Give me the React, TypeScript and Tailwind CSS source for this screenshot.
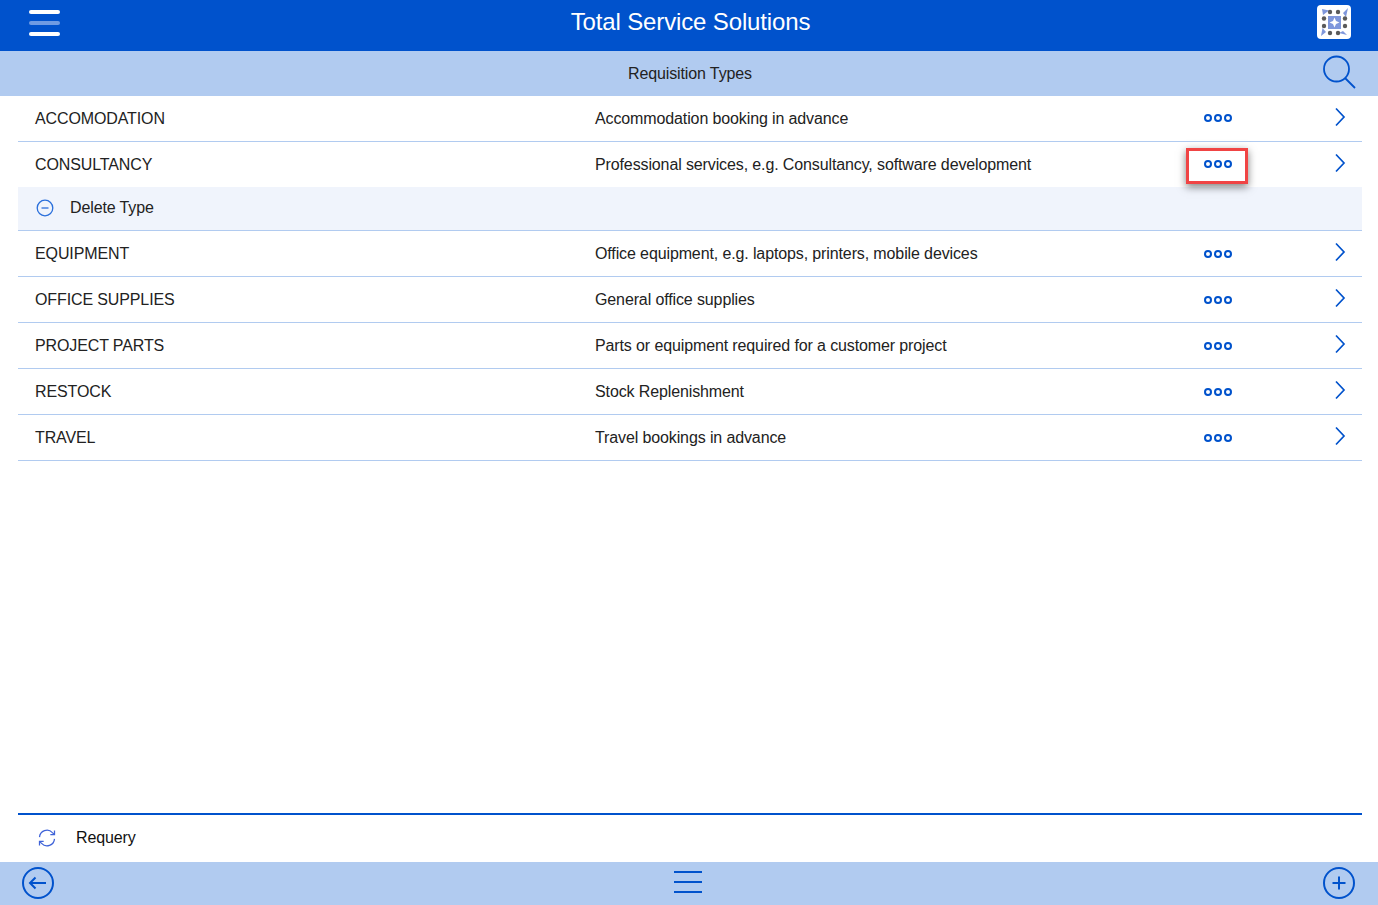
const rows = [
  { name: "ACCOMODATION", desc: "Accommodation booking in advance" },
  { name: "CONSULTANCY", desc: "Professional services, e.g. Consultancy, software development", open: true },
  { name: "EQUIPMENT", desc: "Office equipment, e.g. laptops, printers, mobile devices", low: true },
  { name: "OFFICE SUPPLIES", desc: "General office supplies", low: true },
  { name: "PROJECT PARTS", desc: "Parts or equipment required for a customer project", low: true },
  { name: "RESTOCK", desc: "Stock Replenishment", low: true },
  { name: "TRAVEL", desc: "Travel bookings in advance", low: true },
];

function Dots() {
  return (
    <svg width="30" height="10" viewBox="0 0 30 10" fill="none" stroke="#0052cc" strokeWidth="2">
      <circle cx="5" cy="5" r="3" />
      <circle cx="15" cy="5" r="3" />
      <circle cx="25" cy="5" r="3" />
    </svg>
  );
}

function Chevron() {
  return (
    <svg width="12" height="20" viewBox="0 0 12 20" fill="none" stroke="#0052cc" strokeWidth="1.7">
      <path d="M2 1.5 10 10 2 18.5" />
    </svg>
  );
}

function Logo() {
  return (
    <div className="flex h-[34px] w-[34px] items-center justify-center rounded-[4px] bg-white">
      <svg width="30" height="30" viewBox="0 0 30 30">
        <path d="M3 2 10 3.5 4 8ZM29 1 27 10 24 6ZM2 29 3.5 21 7 25ZM28 28 20 26 24 24Z" fill="#7f97dc" />
        <rect x="9" y="9" width="13" height="13" fill="#7f97dc" />
        <path d="M15.5 10.5 17 14 20.5 15.5 17 17 15.5 20.5 14 17 10.5 15.5 14 14Z" fill="#fff" />
        <g fill="#5a5a5a">
          <circle cx="11" cy="5" r="2.2" />
          <circle cx="19" cy="5" r="2.2" />
          <circle cx="5" cy="11.5" r="2.2" />
          <circle cx="5" cy="19" r="2.2" />
          <circle cx="26" cy="11.5" r="2.2" />
          <circle cx="26" cy="19" r="2.2" />
          <circle cx="11" cy="26" r="2.2" />
          <circle cx="19" cy="26" r="2.2" />
        </g>
      </svg>
    </div>
  );
}

export default function App() {
  return (
    <div className="flex h-[905px] w-full flex-col overflow-hidden bg-white font-['Liberation_Sans',sans-serif] text-[16px] tracking-[-0.12px] text-[#222]">
      <header className="flex h-[51px] items-center justify-between bg-[#0052cc] pl-[29px] pr-[27px]">
        <div className="flex w-[31px] flex-col gap-[7px] pb-[6px]">
          <span className="h-[4px] rounded-full bg-white" />
          <span className="h-[4px] rounded-full bg-[#6f9be3]" />
          <span className="h-[4px] rounded-full bg-white" />
        </div>
        <h1 className="ml-[4px] pb-[7px] text-[24px] tracking-[-0.14px] text-white">
          Total Service Solutions
        </h1>
        <div className="pb-[7px]">
          <Logo />
        </div>
      </header>

      <div className="flex h-[45px] items-center justify-between bg-[#b1cbf0] pl-[628px] pr-[22px]">
        <span>Requisition Types</span>
        <svg className="mb-[3px]" width="34" height="34" viewBox="0 0 34 34" fill="none" stroke="#0052cc" strokeWidth="1.8">
          <circle cx="14.5" cy="14" r="12.5" />
          <path d="M23 23 33 33" />
        </svg>
      </div>

      <main className="flex-1 pl-[18px] pr-[16px]">
        {rows.map((row) => (
          <div key={row.name}>
            <div
              className={
                row.open
                  ? "flex h-[45px] items-center"
                  : "flex h-[46px] items-center border-b border-[#b1cbf0]"
              }
            >
              <div className="w-[577px] pl-[17px]">{row.name}</div>
              <div className="w-[580px]">{row.desc}</div>
              <div className={row.low ? "flex w-[86px] justify-center pt-[1px]" : "relative flex w-[86px] justify-center pb-[1px]"}>
                <Dots />
                {row.open && (
                  <div className="absolute left-[11px] top-[-11px] h-[36px] w-[62px] border-[3px] border-[#f04444] shadow-[0_3px_8px_rgba(0,0,0,0.5)]" />
                )}
              </div>
              <div className="flex flex-1 justify-center pb-[3px] pl-[56px]">
                <Chevron />
              </div>
            </div>
            {row.open && (
              <div className="flex h-[44px] items-center gap-[16px] border-b border-[#b1cbf0] bg-[#f0f4fc] pb-[2px] pl-[18px]">
                <svg width="18" height="18" viewBox="0 0 18 18" fill="none" stroke="#2a6fdb" strokeWidth="1.3">
                  <circle cx="9" cy="9" r="7.8" />
                  <path d="M5.5 9h7" />
                </svg>
                <span>Delete Type</span>
              </div>
            )}
          </div>
        ))}
      </main>

      <div className="ml-[18px] mr-[16px] flex h-[49px] items-center gap-[19px] border-t-2 border-[#0052cc] pb-[2px] pl-[19px] text-[#111]">
        <svg width="20" height="20" viewBox="0 0 24 24" fill="none" stroke="#3f63d8" strokeWidth="1.5">
          <path d="M3 11a9 9 0 0 1 15.5-5.5L21 8" />
          <path d="M21 3v5h-5" />
          <path d="M21 13a9 9 0 0 1-15.5 5.5L3 16" />
          <path d="M3 21v-5h5" />
        </svg>
        <span>Requery</span>
      </div>

      <footer className="flex h-[43px] items-center justify-between bg-[#b1cbf0] pb-[2px] pl-[22px] pr-[23px]">
        <svg width="32" height="32" viewBox="0 0 32 32" fill="none" stroke="#0052cc" strokeWidth="2">
          <circle cx="16" cy="16" r="15" />
          <path d="M24 16H8M13.5 10.5 8 16l5.5 5.5" />
        </svg>
        <div className="mb-[2px] mr-[2px] flex w-[28px] flex-col gap-[8px]">
          <span className="h-[2px] bg-[#0052cc]" />
          <span className="h-[2px] bg-[#0052cc]" />
          <span className="h-[2px] bg-[#0052cc]" />
        </div>
        <svg width="32" height="32" viewBox="0 0 32 32" fill="none" stroke="#0052cc" strokeWidth="2">
          <circle cx="16" cy="16" r="15" />
          <path d="M16 9.5v13M9.5 16h13" />
        </svg>
      </footer>
    </div>
  );
}
